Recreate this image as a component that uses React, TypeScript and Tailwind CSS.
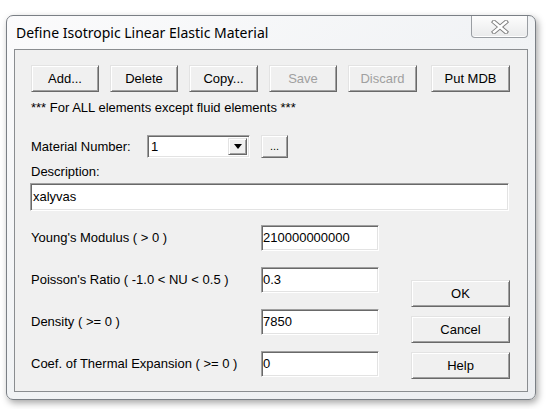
import { ReactNode } from 'react';

const font = "font-['Liberation_Sans',Arial,sans-serif]";

function Btn({ children, disabled = false, className = '' }: { children: ReactNode; disabled?: boolean; className?: string }) {
  return (
    <div
      className={`flex h-[27px] shrink-0 items-center justify-center border border-t-[#e3e3e3] border-l-[#e3e3e3] border-r-[#696969] border-b-[#696969] bg-[#f0f0f0] text-[13px] leading-none shadow-[inset_1px_1px_0_#ffffff,inset_-1px_-1px_0_#a0a0a0] ${
        disabled ? 'text-[#a0a0a0]' : 'text-black'
      } ${className}`}
    >
      {children}
    </div>
  );
}

function Field({ value, className = '', center = false }: { value: string; className?: string; center?: boolean }) {
  return (
    <div
      className={`flex shrink-0 border border-t-[#a0a0a0] border-l-[#a0a0a0] border-r-[#ffffff] border-b-[#ffffff] bg-white pl-[1px] text-[13px] leading-[16px] text-black shadow-[inset_1px_1px_0_#696969,inset_-1px_-1px_0_#e3e3e3] ${
        center ? 'items-center' : 'items-start pt-[4px]'
      } ${className}`}
    >
      {value}
    </div>
  );
}

function CloseGlyph() {
  return (
    <svg width="18" height="14" viewBox="0 0 18 14">
      <g strokeLinecap="square">
        <path d="M3 2 L15 12 M15 2 L3 12" stroke="#808080" strokeWidth="4.4" />
        <path d="M3 2 L15 12 M15 2 L3 12" stroke="#ffffff" strokeWidth="2.4" />
      </g>
    </svg>
  );
}

const rows = [
  { label: "Young's Modulus ( > 0 )", value: '210000000000' },
  { label: "Poisson's Ratio ( -1.0 < NU < 0.5 )", value: '0.3' },
  { label: 'Density ( >= 0 )', value: '7850' },
  { label: 'Coef. of Thermal Expansion ( >= 0 )', value: '0' },
];

export default function App() {
  return (
    <div className="h-[409px] w-[546px] overflow-hidden bg-white pl-[6px] pt-[15px]">
      <div className="flex h-[385px] w-[530px] flex-col rounded-[7px] border border-[#7a7f85] bg-gradient-to-br from-[#fbfbfc] via-[#f1f3f5] to-[#eceef1] px-[7px] pb-[7px] shadow-[2px_3px_7px_rgba(0,0,0,0.35)]">
        {/* title bar */}
        <div className="flex h-[33px] shrink-0 items-center justify-between">
          <div className="pl-[2px] font-['Noto_Sans',sans-serif] text-[14px] leading-none text-black">
            Define Isotropic Linear Elastic Material
          </div>
          <div className="flex h-[22px] w-[57px] items-center justify-center self-start rounded-b-[4px] border border-t-0 border-[#9a9ea3] bg-gradient-to-b from-[#fdfdfd] to-[#e9eaeb] shadow-[inset_0_-1px_0_#ffffff]">
            <CloseGlyph />
          </div>
        </div>

        {/* client area */}
        <div className={`flex flex-1 flex-col border border-[#8a8d90] bg-[#f0f0f0] pl-[16px] pt-[15px] ${font}`}>
          <div className="flex">
            <Btn className="w-[68px]">Add...</Btn>
            <Btn className="ml-[11px] w-[68px]">Delete</Btn>
            <Btn className="ml-[11px] w-[69px]">Copy...</Btn>
            <Btn disabled className="ml-[11px] w-[68px]">Save</Btn>
            <Btn disabled className="ml-[11px] w-[69px]">Discard</Btn>
            <Btn className="ml-[14px] w-[79px]">Put MDB</Btn>
          </div>

          <div className="mt-[8px] h-[16px] text-[13px] leading-[16px] text-black">
            *** For ALL elements except fluid elements ***
          </div>

          <div className="mt-[19px] flex h-[23px] items-center">
            <div className="w-[116px] text-[13px] text-black">Material Number:</div>
            <div className="flex h-[23px] w-[103px] items-center border border-t-[#a0a0a0] border-l-[#a0a0a0] border-r-[#ffffff] border-b-[#ffffff] bg-white shadow-[inset_1px_1px_0_#696969,inset_-1px_-1px_0_#e3e3e3]">
              <div className="flex-1 pl-[3px] text-[13px] leading-none text-black">1</div>
              <div className="mr-[2px] flex h-[17px] w-[19px] items-center justify-center border border-t-[#e3e3e3] border-l-[#e3e3e3] border-r-[#696969] border-b-[#696969] bg-[#f0f0f0] shadow-[inset_1px_1px_0_#ffffff,inset_-1px_-1px_0_#a0a0a0]">
                <svg width="8" height="5" viewBox="0 0 8 5">
                  <path d="M0 0 H8 L4 5 Z" fill="#000" />
                </svg>
              </div>
            </div>
            <Btn className="ml-[11px] !h-[23px] w-[27px] !text-[11px]">...</Btn>
          </div>

          <div className="mt-[6px] h-[16px] text-[13px] leading-[16px] text-black">Description:</div>
          <Field value="xalyvas" center className="-ml-[1px] mt-[3px] h-[28px] w-[479px] pl-[2px]" />

          <div className="mt-[14px] flex">
            <div className="flex flex-col gap-[16px]">
              {rows.map((r) => (
                <div key={r.label} className="flex h-[26px] items-center">
                  <div className="w-[230px] text-[13px] text-black">{r.label}</div>
                  <Field value={r.value} className="h-[26px] w-[118px]" />
                </div>
              ))}
            </div>
            <div className="ml-[32px] mt-[55px] flex flex-col gap-[9px]">
              <Btn className="w-[99px]">OK</Btn>
              <Btn className="w-[99px]">Cancel</Btn>
              <Btn className="w-[99px]">Help</Btn>
            </div>
          </div>
        </div>
      </div>
    </div>
  );
}
